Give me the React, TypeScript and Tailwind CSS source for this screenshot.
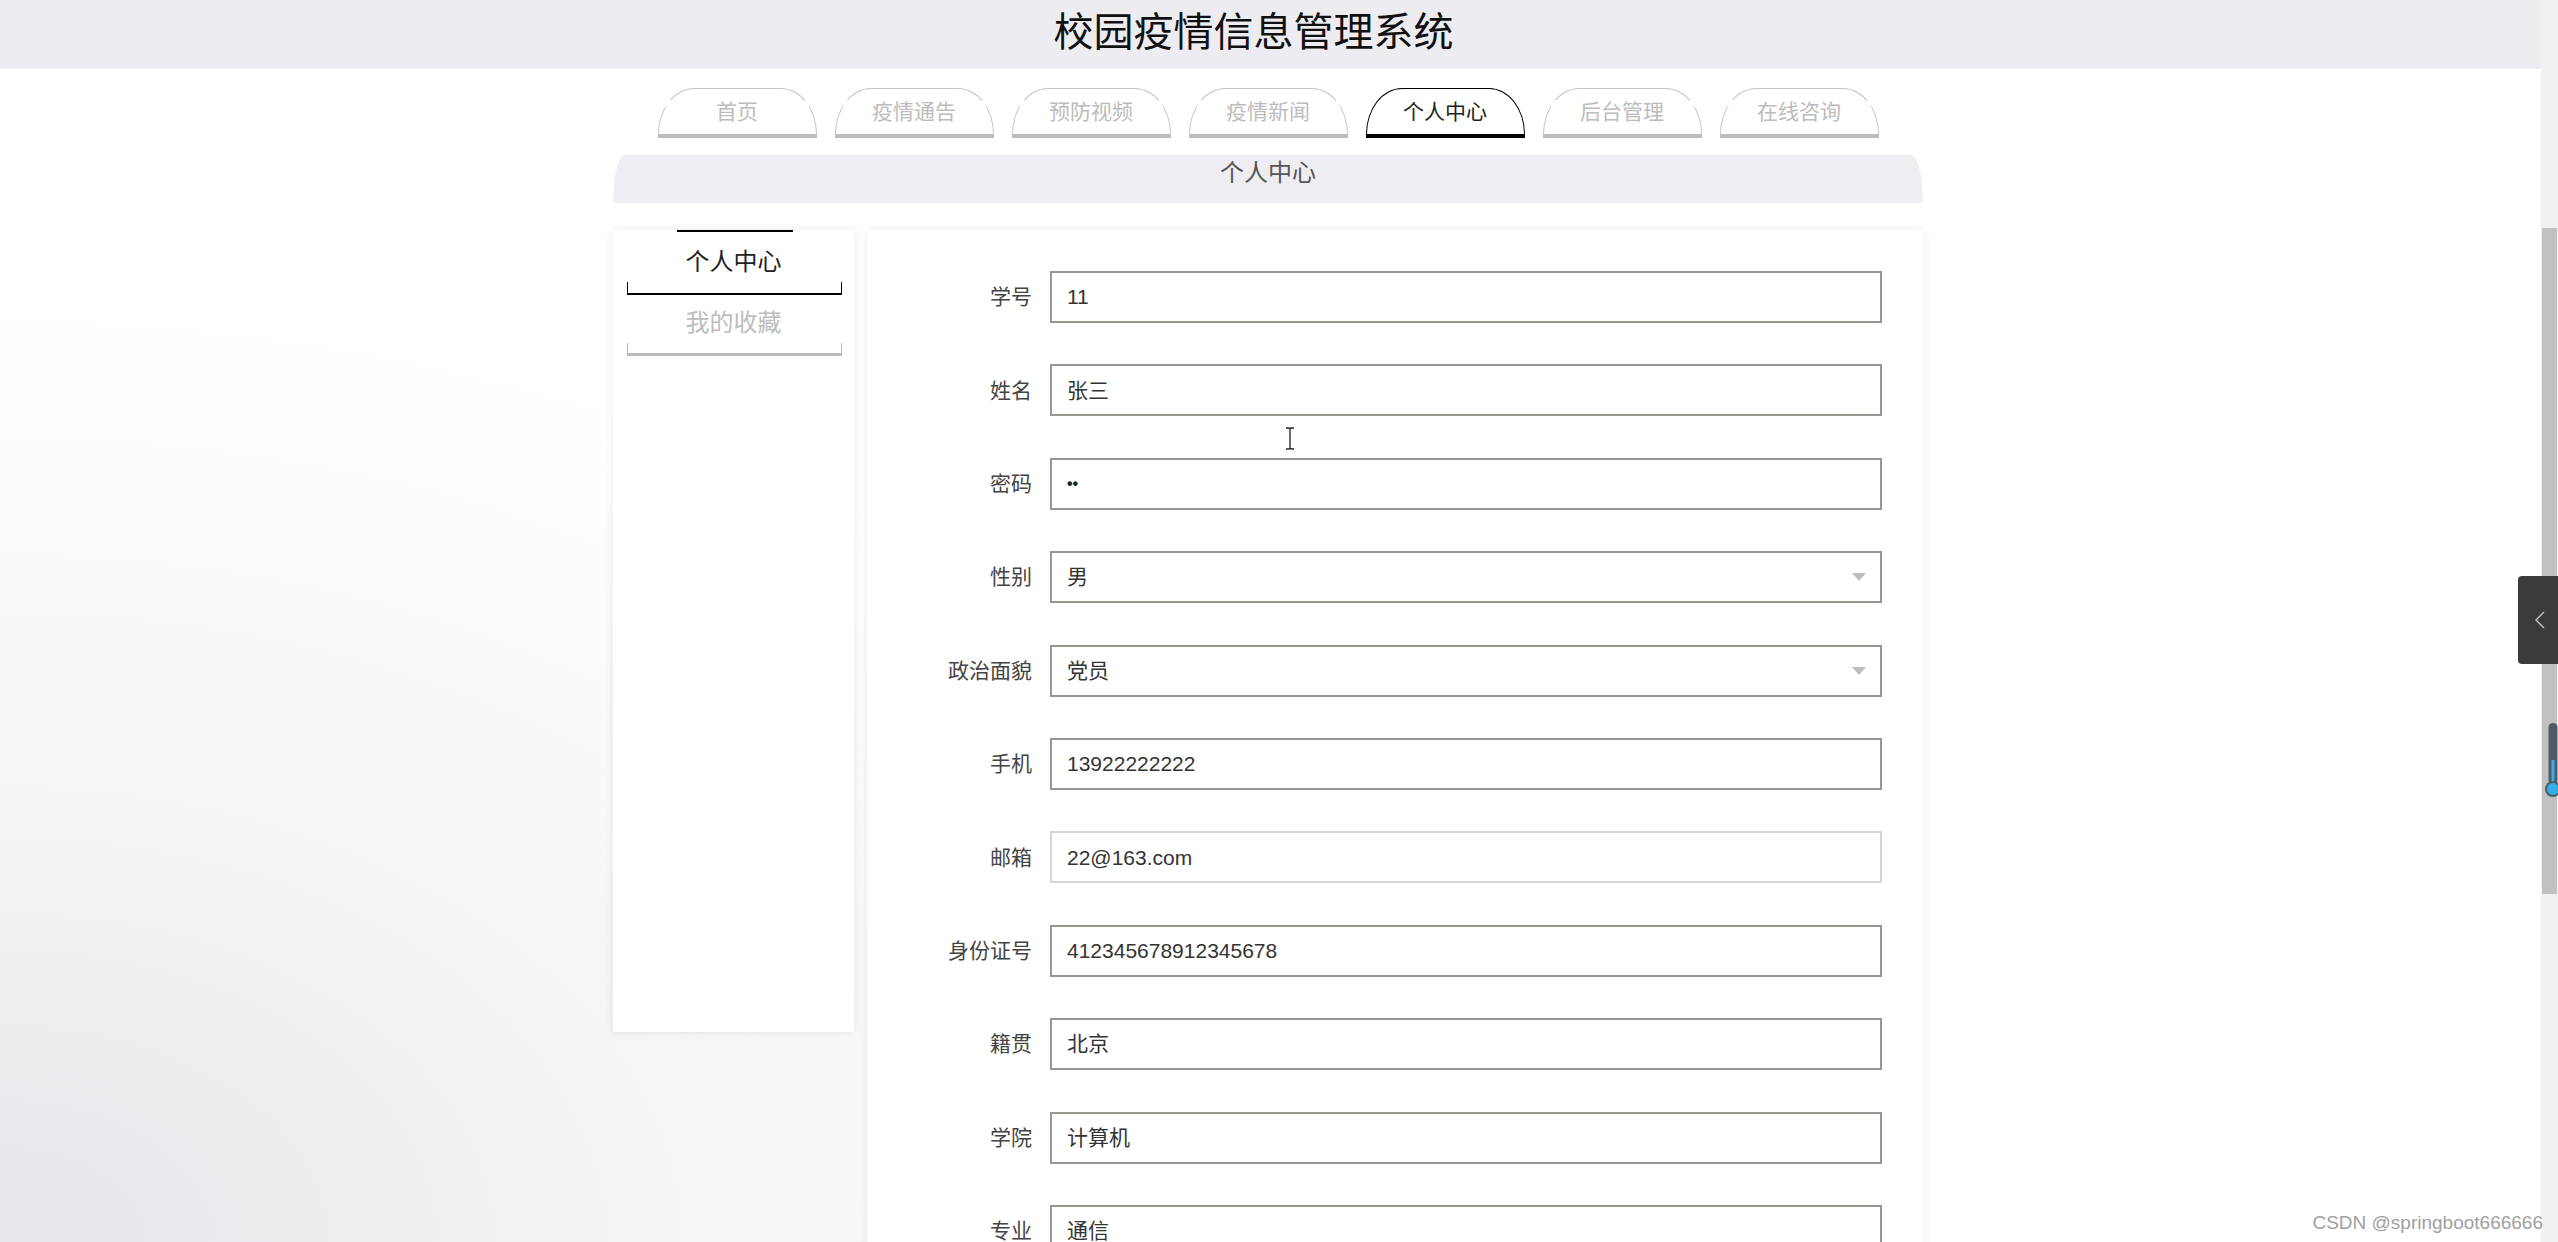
import React from "react";

const NAV = ["首页", "疫情通告", "预防视频", "疫情新闻", "个人中心", "后台管理", "在线咨询"];

// form rows: label, value, kind
const FIELDS: { label: string; value: string; kind?: "select" | "light" | "password" }[] = [
    { label: "学号", value: "11" },
    { label: "姓名", value: "张三" },
    { label: "密码", value: "••", kind: "password" },
    { label: "性别", value: "男", kind: "select" },
    { label: "政治面貌", value: "党员", kind: "select" },
    { label: "手机", value: "13922222222" },
    { label: "邮箱", value: "22@163.com", kind: "light" },
    { label: "身份证号", value: "412345678912345678" },
    { label: "籍贯", value: "北京" },
    { label: "学院", value: "计算机" },
    { label: "专业", value: "通信" },
];

function Field({ label, value, kind }: { label: string; value: string; kind?: string }) {
    const border = kind === "light" ? "border-[#d6d6d6]" : "border-[#979792]";
    return (
        <div className="flex items-center">
            <label className="w-[183px] shrink-0 pr-[18px] text-right text-[21px] text-[#444]">{label}</label>
            <div className={`relative flex h-[52px] w-[832px] items-center border-2 ${border} bg-white px-[15px] text-[21px] text-[#333]`}>
                {kind === "password" ? (
                    <span className="text-[16px] font-bold tracking-[0px] text-[#222]">{value}</span>
                ) : (
                    <span>{value}</span>
                )}
                {kind === "select" && (
                    <span className="absolute right-[14px] top-1/2 -translate-y-1/2 h-0 w-0 border-x-[7px] border-t-[8px] border-x-transparent border-t-[#bdbdbd]"></span>
                )}
            </div>
        </div>
    );
}

export default function App() {
    return (
        <div className="relative flex h-[1242px] w-full overflow-hidden bg-white font-['Liberation_Sans','Noto_Sans_CJK_SC',sans-serif]">
            {/* Page */}
            <div className="min-w-0 flex-1 bg-[radial-gradient(ellipse_55%_75%_at_0%_100%,#e6e6eb_0%,#f4f4f6_45%,#ffffff_100%)]">

                {/* Header */}
                <header className="flex h-[69px] items-center justify-center bg-[#ededf1] pb-[6px] pr-[34px]">
                    <h1 className="text-[40px] leading-none text-[#111]">校园疫情信息管理系统</h1>
                </header>

                <div className="ml-[613px] w-[1310px]">
                    {/* Nav tabs */}
                    <nav className="mt-[19px] flex justify-center gap-[18px]">
                        {NAV.map((item) => {
                            const active = item === "个人中心";
                            return (
                                <div
                                    key={item}
                                    className={`flex h-[50px] w-[159px] items-center justify-center rounded-t-[36px_46px] border-x-[1.5px] border-t-[1.5px] border-b-4 bg-white text-[21px] ${
                                        active
                                            ? "border-black text-[#222]"
                                            : "border-x-[#c4c4c4] border-t-[#c4c4c4] border-b-[#bdbdbd] text-[#bcbcbc]"
                                    }`}
                                >
                                    {item}
                                </div>
                            );
                        })}
                    </nav>

                    {/* Section banner */}
                    <div className="mt-[17px] flex h-[48px] justify-center rounded-t-[12px_48px] bg-[#eeeef2] pt-[2px] text-[24px] leading-[32px] text-[#555]">
                        个人中心
                    </div>

                    {/* Content */}
                    <div className="mt-[27px] flex items-start gap-[13px]">

                        {/* Sidebar */}
                        <aside className="h-[802px] w-[241px] shrink-0 bg-white shadow-[0_0_8px_rgba(0,0,0,0.09)]">
                            <div className="ml-[64px] h-[2px] w-[116px] bg-black"></div>
                            <div className="mt-[10px] text-center text-[24px] leading-[40px] text-[#222]">个人中心</div>
                            <div className="ml-[14px] mr-[12px] h-[13px] border-x-[1.5px] border-b-[2.5px] border-black"></div>
                            <div className="mt-[8px] text-center text-[24px] leading-[40px] text-[#bcbcbc]">我的收藏</div>
                            <div className="ml-[14px] mr-[12px] h-[13px] border-x-[1.5px] border-b-[3px] border-[#bbbbbb]"></div>
                        </aside>

                        {/* Form card */}
                        <main className="h-[1100px] flex-1 bg-white pt-[41px] shadow-[0_0_8px_rgba(0,0,0,0.09)]">
                            <div className="flex flex-col gap-[41.4px]">
                                {FIELDS.map((f) => (
                                    <Field key={f.label} {...f} />
                                ))}
                            </div>
                        </main>
                    </div>
                </div>
            </div>

            {/* Scrollbar */}
            <div className="w-[17px] shrink-0 bg-[#f1f1f1] pt-[228px]">
                <div className="mx-px h-[666px] bg-[#c1c1c1]"></div>
            </div>

            {/* Mouse cursor */}
            <svg className="absolute left-[1284px] top-[427px]" width="12" height="23" viewBox="0 0 12 23">
                <path d="M2 1h3l1 1 1-1h3M6 2v19M2 22h3l1-1 1 1h3" fill="none" stroke="#222" strokeWidth="1.3" />
            </svg>

            {/* Side drawer handle */}
            <div className="absolute left-[2518px] top-[576px] flex h-[88px] w-[40px] items-center rounded-l-[4px] bg-[#3b3b3b] pl-[17px]">
                <svg width="10" height="18" viewBox="0 0 10 18">
                    <polyline points="9,1 1,9 9,17" fill="none" stroke="#c8c8c8" strokeWidth="1.4" />
                </svg>
            </div>

            {/* Thermometer widget */}
            <svg className="absolute left-[2545px] top-[722px]" width="16" height="76" viewBox="0 0 16 76">
                <rect x="3.5" y="1" width="9" height="62" rx="4.5" fill="#4e5a66" />
                <rect x="6.5" y="38" width="3" height="26" fill="#33aee8" />
                <circle cx="8" cy="67" r="7" fill="#33aee8" stroke="#4e5a66" strokeWidth="2" />
            </svg>

            {/* Watermark */}
            <div className="absolute right-[15px] top-[1209px] text-[19px] text-[#a0a0a0] [text-shadow:0_0_2px_#fff]">
                CSDN @springboot666666
            </div>
        </div>
    );
}
